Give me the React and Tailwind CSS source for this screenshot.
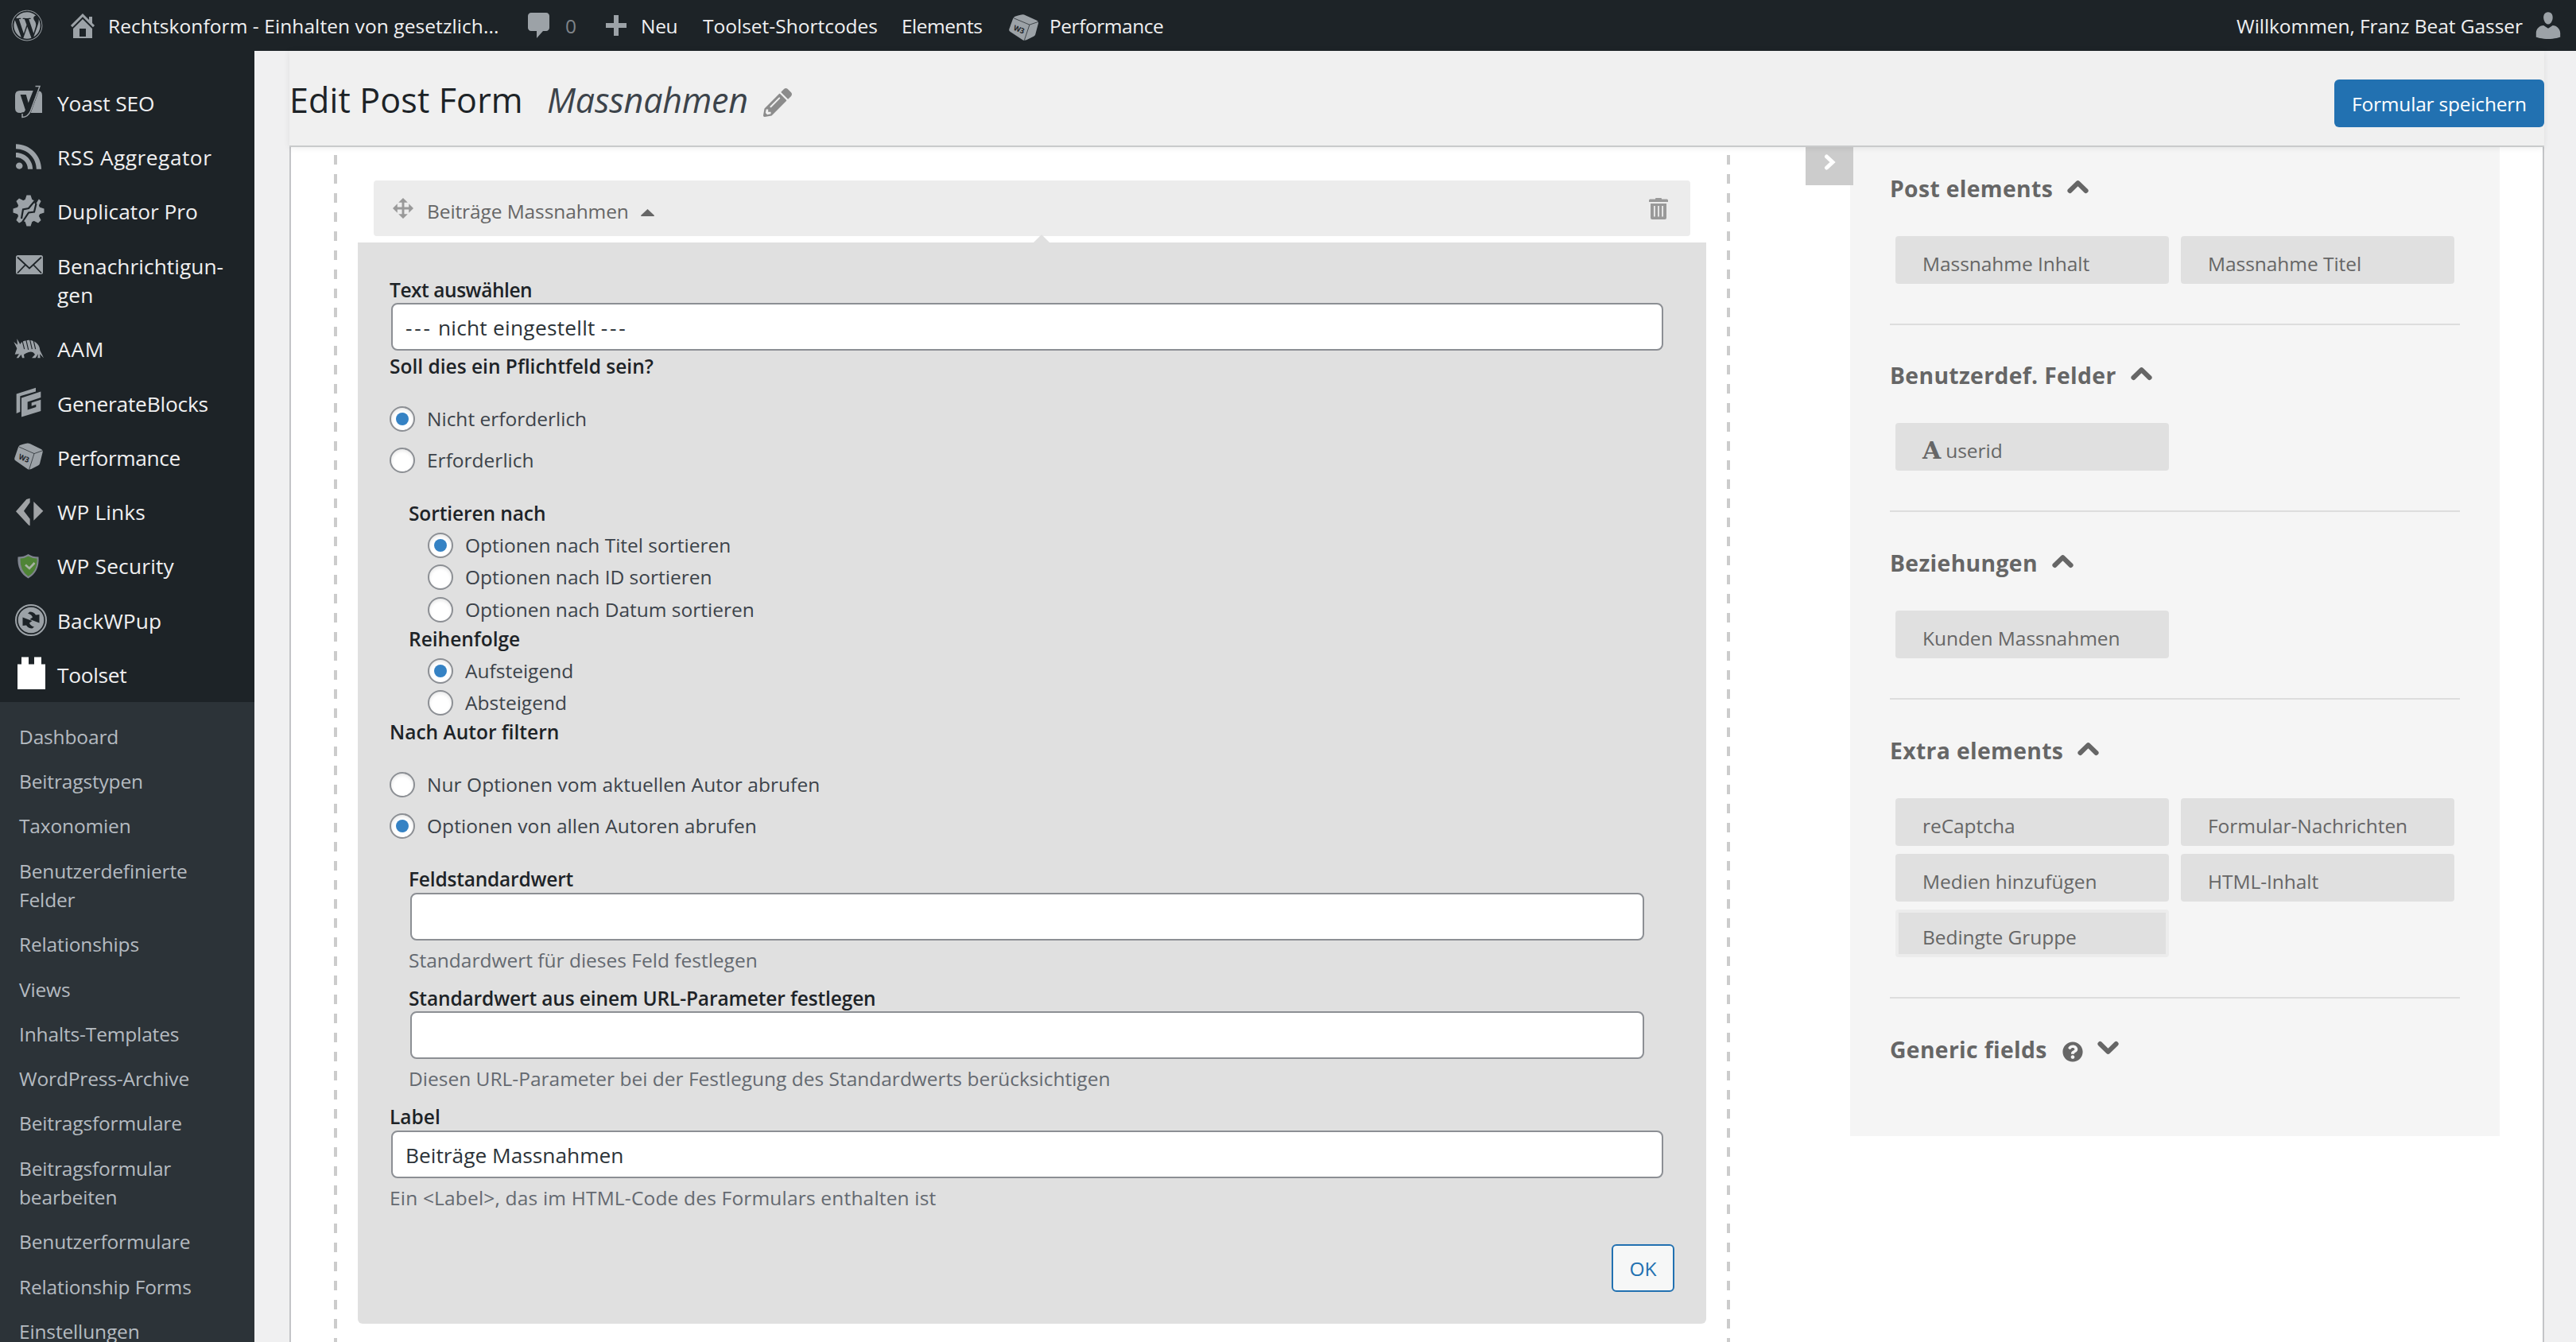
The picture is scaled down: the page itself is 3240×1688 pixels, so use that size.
import { FaWordpress, FaPencilAlt, FaQuestionCircle } from "react-icons/fa";

/* ---------- icons ---------- */

function W3Cube({ className, transform, viewBox = "54 412 107 88" }) {
  return (
    <svg className={className} viewBox={viewBox} preserveAspectRatio="none">
      <g transform={transform}>
        <path
          d="M73 421 Q76 418 96 414 Q106 411 114 415 L154 432 Q163 436 161 442 L150 480 Q149 484 144 486 L118 498 Q109 501 103 497 L58 470 Q53 467 55 461 L69 426 Z"
          fill="#9ca2a7"
        />
        <path d="M72 425 L129 447 L161 437 M129 447 L110 499" fill="none" stroke="#1d2327" strokeWidth="2" />
        <text
          x="69"
          y="464"
          fontSize="25"
          fontWeight="700"
          fill="#1d2327"
          fontFamily="Open Sans, sans-serif"
          transform="rotate(20 69 464)"
          textLength="40"
          lengthAdjust="spacingAndGlyphs"
        >
          W3
        </text>
      </g>
    </svg>
  );
}

function MenuIcon({ children }) {
  return (
    <svg className="h-[68px] w-[72px] shrink-0" viewBox="0 0 72 68" fill="#9ca2a7">
      {children}
    </svg>
  );
}

const YoastIcon = (
  <MenuIcon>
    <path d="M25 19 H47 Q53 19 53 25 V47 H25 Q19 47 19 41 V25 Q19 19 25 19 Z" />
    <path d="M45 13.5 H50 L38 46 Q36 51.5 28 52.5 V47.5 Q32 47 33 43.5 L27 25 H32 L35.5 37.5 Z" fill="#1d2327" stroke="#1d2327" strokeWidth="2" />
    <path d="M44.5 13.5 H50 L38.5 44.5 Q35.5 52 28 52.5 V48" fill="none" stroke="#9ca2a7" strokeWidth="1.5" />
  </MenuIcon>
);

const RssIcon = (
  <MenuIcon>
    <path
      transform="translate(16 12.8) scale(2)"
      d="M14.92 18H18C18 9.32 10.82 2.25 2 2.25v3.02c7.12 0 12.92 5.71 12.92 12.73zm-5.44 0h3.08C12.56 12.27 7.82 7.6 2 7.6v3.02c2 0 3.87.77 5.29 2.16C8.7 14.17 9.48 16.03 9.48 18zm-5.35-.02c1.17 0 2.13-.93 2.13-2.09 0-1.15-.96-2.09-2.13-2.09-1.18 0-2.13.94-2.13 2.09 0 1.16.95 2.09 2.13 2.09z"
    />
  </MenuIcon>
);

const DuplicatorIcon = (
  <MenuIcon>
    <circle cx="36" cy="33" r="14.5" />
    {[0, 45, 90, 135, 180, 225, 270, 315].map((a) => (
      <path key={a} d="M31 21 L33.5 13.5 H38.5 L41 21 Z" transform={`rotate(${a} 36 33)`} />
    ))}
    <path d="M27 43 L29 31.5 L36 30 L46 18 M27 49 L36 35.5 L43 34.5 L45.5 24" fill="none" stroke="#1d2327" strokeWidth="2.2" />
    <path d="M50 14 L44 24" stroke="#1d2327" strokeWidth="2.5" />
  </MenuIcon>
);

const MailIcon = (
  <MenuIcon>
    <rect x="20" y="21" width="34" height="24" rx="2.5" />
    <path d="M22 23.5 L37 37.5 L52 23.5 M22 43.5 L32 33 M52 43.5 L42 33" fill="none" stroke="#1d2327" strokeWidth="1.8" />
  </MenuIcon>
);

const ArmadilloIcon = (
  <MenuIcon>
    <g transform="translate(0 -4.9) scale(.3333 .3827)">
      <path d="M56 119 L64 100 L52 78 L66 88 L64 68 L76 86 Q82 76 96 74 Q118 68 138 82 Q150 92 151 106 L165 131 L150 118 L152 131 H142 L144 118 L134 131 H120 L132 120 Q124 108 108 112 Q98 114 90 120 L92 131 H84 L80 120 L70 131 H62 L72 118 Z" />
      <path d="M84 74 L92 102 M98 70 L107 104 M112 68 L121 102 M126 72 L134 102" fill="none" stroke="#1d2327" strokeWidth="3.4" />
    </g>
  </MenuIcon>
);

const GenerateBlocksIcon = (
  <MenuIcon>
    <g transform="translate(0 -73.2) scale(.3333 .3827)">
      <path d="M62 250 L135 230 V242 L76 257 V309 L62 314 Z" />
      <path d="M81 263 L154 242 V262 L104 276 V302 L136 293 V285 L119 290 V279 L154 269 V306 L81 326 Z" />
    </g>
  </MenuIcon>
);

const PerformanceIcon = (
  <W3Cube
    className="h-[68px] w-[72px] shrink-0"
    viewBox="0 0 72 68"
    transform="translate(0 -141.5) scale(.3333 .3827)"
  />
);

const LinksIcon = (
  <MenuIcon>
    <g transform="translate(0 -209.8) scale(.3333 .3827)" fill="#a0a3a6">
      <path d="M60 635 L100 595 L113 592 V606 L90 634 L113 660 V682 L108 680 Z" />
      <path d="M127 603 L163 634 L127 665 Z" />
    </g>
  </MenuIcon>
);

const ShieldIcon = (
  <MenuIcon>
    <path d="M35.5 19 Q41 22.5 48.5 22.5 Q50 41 35.5 49.5 Q21 41 22.5 22.5 Q30 22.5 35.5 19 Z" fill="#80858f" />
    <path d="M35.5 21.5 Q40.5 24.5 46.5 24.5 Q47.5 39.500 35.5 47 Q25 39.500 25.500 24.500 Q31 24.500 35.500 21.500 Z" fill="#4f8436" />
    <path d="M32 32.5 L37 37 L43.5 30" fill="none" stroke="#a9b3a5" strokeWidth="2.6" />
  </MenuIcon>
);

const BackWPupIcon = (
  <MenuIcon>
    <circle cx="39" cy="34" r="19" fill="none" stroke="#9ca2a7" strokeWidth="2" />
    <circle cx="39" cy="34" r="16.3" />
    <path d="M37.5 23.5 Q42.5 23.5 45 27.5 L49.5 27 V37.5 L37.5 33 L41 30.5 Q40 27 35 25.5 Z" fill="#1d2327" />
    <path d="M40.5 44.5 Q35.5 44.5 33 40.5 L28.5 41 V30.5 L40.5 35 L37 37.5 Q38 41 43 42.5 Z" fill="#1d2327" />
  </MenuIcon>
);

const ToolsetIcon = (
  <MenuIcon>
    <path d="M22 20.5 H27 V11.5 H36 V20.5 H43 V11.5 H52 V20.5 H57 V52 H22 Z" fill="#fff" />
  </MenuIcon>
);

function Chevron({ down = false }) {
  return (
    <svg
      className={down ? "h-[18px] w-[27px] shrink-0 rotate-180" : "h-[18px] w-[27px] shrink-0"}
      viewBox="0 0 27 18"
      fill="none"
      stroke="#666"
      strokeWidth="6"
      strokeLinejoin="round"
      strokeLinecap="round"
    >
      <path d="M3.4 14 L13.5 4.2 L23.6 14" />
    </svg>
  );
}

/* ---------- top bar ---------- */

function AdminBar() {
  return (
    <header className="flex h-16 shrink-0 items-center bg-[#1d2327] pl-[14px] text-[24.5px] whitespace-nowrap text-[#f0f0f1]">
      <div className="w-[70px]">
        <FaWordpress className="size-10 text-[#9ca2a7]" />
      </div>
      <svg className="mr-[12px] size-[40px]" viewBox="0 0 20 20" fill="#9ca2a7">
        <path d="M16 8.5l1.53 1.53-1.06 1.06L10 4.6l-6.47 6.49-1.06-1.06L10 2.5l4 4v-2h2v4zm-6-2.46l6 5.99V18H4v-5.97zM12 17v-5H8v5h4z" />
      </svg>
      <span className="w-[522px] pt-[3px] tracking-[0.08px]">Rechtskonform - Einhalten von gesetzlich...</span>
      <svg className="mr-[13px] h-[40px] w-[40px]" viewBox="0 0 20 20" fill="#9ca2a7">
        <path d="M5 2h9.5c1.1 0 2 .9 2 2v7.5c0 1.1-.9 2-2 2h-2L8.5 18v-4.5H5c-1.1 0-2-.9-2-2V4c0-1.1.9-2 2-2z" />
      </svg>
      <span className="w-[51px] pt-[3px] text-[#7f8489]">0</span>
      <svg className="mr-[18px] size-[26px]" viewBox="0 0 26 26" fill="#9ca2a7">
        <path d="M10 0 H16 V10 H26 V16 H16 V26 H10 V16 H0 V10 H10 Z" />
      </svg>
      <span className="w-[78px] pt-[3px] tracking-[-0.3px]">Neu</span>
      <span className="w-[250px] pt-[3px]">Toolset-Shortcodes</span>
      <span className="w-[135px] pt-[3px] tracking-[-0.5px]">Elements</span>
      <W3Cube className="mt-[5px] h-[33px] w-[37px]" />
      <span className="ml-[14px] pt-[3px] tracking-[-0.45px]">Performance</span>
      <span className="ml-auto pt-[3px] tracking-[-0.06px]">Willkommen, Franz Beat Gasser</span>
      <svg className="mr-[14px] ml-[11px] size-[42px]" viewBox="0 0 20 20" fill="#9ca2a7">
        <path d="M10 9.25c-2.27 0-2.73-3.44-2.73-3.44C7 4.02 7.82 2 9.97 2c2.16 0 2.98 2.02 2.71 3.81 0 0-.41 3.44-2.68 3.44zm0 2.57L12.72 10c2.39 0 4.52 2.33 4.52 4.53v2.49s-3.65 1.13-7.24 1.13c-3.65 0-7.24-1.13-7.24-1.13v-2.49c0-2.25 1.94-4.48 4.47-4.48z" />
      </svg>
    </header>
  );
}

/* ---------- left navigation ---------- */

const menu = [
  { icon: YoastIcon, label: "Yoast SEO" },
  { icon: RssIcon, label: "RSS Aggregator", tight: "tracking-[0.5px]" },
  { icon: DuplicatorIcon, label: "Duplicator Pro", tight: "tracking-[0px]" },
  { icon: MailIcon, label: "Benachrichtigun-\ngen", tight: "tracking-[0.05px]" },
  { icon: ArmadilloIcon, label: "AAM", tight: "tracking-[0.8px]" },
  { icon: GenerateBlocksIcon, label: "GenerateBlocks", tight: "tracking-[-0.2px]" },
  { icon: PerformanceIcon, label: "Performance", tight: "tracking-[-0.4px]" },
  { icon: LinksIcon, label: "WP Links", tight: "tracking-[0.15px]" },
  { icon: ShieldIcon, label: "WP Security", tight: "tracking-[0.2px]" },
  { icon: BackWPupIcon, label: "BackWPup", tight: "tracking-[0.1px]" },
  { icon: ToolsetIcon, label: "Toolset", tight: "tracking-[-0.3px]" },
];

const submenu = [
  "Dashboard",
  "Beitragstypen",
  "Taxonomien",
  "Benutzerdefinierte\nFelder",
  "Relationships",
  "Views",
  "Inhalts-Templates",
  "WordPress-Archive",
  "Beitragsformulare",
  "Beitragsformular\nbearbeiten",
  "Benutzerformulare",
  "Relationship Forms",
  "Einstellungen",
];

function Sidebar() {
  return (
    <nav className="flex w-80 shrink-0 flex-col bg-[#1d2327] pt-[31.3px]">
      <ul className="text-[26.3px] leading-[36.4px] text-[#f0f0f1]">
        {menu.map(({ icon, label, tight = "tracking-[-0.1px]" }) => (
          <li key={label} className="flex items-start">
            {icon}
            <span className={`pt-[16.45px] pb-[15.45px] whitespace-pre ${tight}`}>{label}</span>
          </li>
        ))}
      </ul>
      <ul className="grow bg-[#2c3338] pt-4 pl-6 text-[24.5px] leading-[36.4px] tracking-[-0.15px] text-[#b5bbc1]">
        {submenu.map((label) => (
          <li key={label} className="py-[9.95px] whitespace-pre">
            {label}
          </li>
        ))}
      </ul>
    </nav>
  );
}

/* ---------- form controls ---------- */

function Label({ className = "", children }) {
  return <div className={`h-8 text-[24.5px] leading-8 font-semibold text-[#1d2327] ${className}`}>{children}</div>;
}

function Hint({ className = "", children }) {
  return <p className={`mt-[9px] h-8 text-[24.5px] leading-8 text-[#646970] ${className}`}>{children}</p>;
}

function Field({ className = "", children }) {
  return (
    <div
      className={`mr-[14px] ml-[2px] flex h-[60px] items-center rounded-lg border-2 border-[#8c8f94] bg-white px-4 pt-[3px] text-[26.3px] whitespace-pre text-[#2c3338] ${className}`}
    >
      {children}
    </div>
  );
}

function Radio({ checked = false, className = "", children }) {
  return (
    <label className={`flex h-8 items-start gap-[15px] text-[24.5px] leading-8 text-[#3c434a] ${className}`}>
      <span className="flex size-8 items-center justify-center rounded-full border-2 border-[#8c8f94] bg-white shadow-[inset_0_2px_4px_rgba(0,0,0,0.1)]">
        {checked && <span className="size-4 rounded-full bg-[#3582c4]" />}
      </span>
      {children}
    </label>
  );
}

function DashedEdge() {
  return (
    <div className="mt-[10px] w-1 shrink-0 bg-[repeating-linear-gradient(to_bottom,#ccc_0_12px,transparent_12px_24px)]" />
  );
}

function FieldEditor() {
  return (
    <section className="w-[1748px] shrink-0 pt-[42px]">
      <div className="mx-[46px] flex h-[70px] items-center rounded bg-[#ececec] pr-7 pl-6">
        <svg className="size-[26px]" viewBox="1 1 18 18" fill="#999">
          <path d="M19 10l-4 4v-3h-4v4h3l-4 4-4-4h3v-4H5v3l-4-4 4-4v3h4V5H6l4-4 4 4h-3v4h4V6z" />
        </svg>
        <span className="ml-[17px] pt-[9px] text-[24.5px] tracking-[-0.1px] text-[#666]">Beiträge Massnahmen</span>
        <svg className="mt-[10px] ml-[15px] h-[9px] w-[17px]" viewBox="0 0 17 9" fill="#666">
          <path d="M8.5 0 L17 8 Q17 9 16 9 H1 Q0 9 0 8 Z" />
        </svg>
        <svg className="ml-auto h-[27px] w-6" viewBox="0 0 24 27" fill="#999">
          <path d="M9 0 H15 Q16 0 16 1 V1.5 H22.5 Q24 1.5 24 3 V5 H0 V3 Q0 1.5 1.5 1.5 H8 V1 Q8 0 9 0 Z" />
          <path
            fillRule="evenodd"
            d="M2 7 H22 V25 Q22 27 20 27 H4 Q2 27 2 25 Z M6 10 V23.5 H7.8 V10 Z M11.1 10 V23.5 H12.9 V10 Z M16.2 10 V23.5 H18 V10 Z"
          />
        </svg>
      </div>

      <div className="relative mx-[26px] mt-2 rounded-b-md bg-[#e0e0e0] px-10 pt-11 pb-10">
        <div className="absolute -top-[10px] left-[850px] h-[10px] w-5 bg-[#e0e0e0] [clip-path:polygon(50%_0,100%_100%,0_100%)]" />
        <Label className="tracking-[-0.45px]">Text auswählen</Label>
        <Field>
          <span className="tracking-[2.8px]">---</span>
          <span className="tracking-[0.25px]"> nicht eingestellt </span>
          <span className="tracking-[2.8px]">---</span>
        </Field>
        <Label className="mt-1">Soll dies ein Pflichtfeld sein?</Label>
        <Radio checked className="mt-[34px]">Nicht erforderlich</Radio>
        <Radio className="mt-5">Erforderlich</Radio>

        <div className="ml-6">
          <Label className="mt-[35px] tracking-[-0.1px]">Sortieren nach</Label>
          <div className="ml-6">
            <Radio checked className="mt-2">Optionen nach Titel sortieren</Radio>
            <Radio className="mt-2">Optionen nach ID sortieren</Radio>
            <Radio className="mt-[9px]">Optionen nach Datum sortieren</Radio>
          </div>
          <Label className="mt-[5px]">Reihenfolge</Label>
          <div className="ml-6">
            <Radio checked className="mt-2">Aufsteigend</Radio>
            <Radio className="mt-2">Absteigend</Radio>
          </div>
        </div>

        <Label className="mt-[5px]">Nach Autor filtern</Label>
        <Radio className="mt-[34px]">
          <span className="tracking-[0.05px]">Nur Optionen vom aktuellen Autor abrufen</span>
        </Radio>
        <Radio checked className="mt-5">
          <span className="tracking-[0.05px]">Optionen von allen Autoren abrufen</span>
        </Radio>

        <div className="mx-6">
          <Label className="mt-[35px] tracking-[-0.2px]">Feldstandardwert</Label>
          <Field className="mt-px" />
          <Hint>Standardwert für dieses Feld festlegen</Hint>
          <Label className="mt-4 tracking-[-0.13px]">Standardwert aus einem URL-Parameter festlegen</Label>
          <Field />
          <Hint>Diesen URL-Parameter bei der Festlegung des Standardwerts berücksichtigen</Hint>
        </div>

        <Label className="mt-4">Label</Label>
        <Field className="mt-px">Beiträge Massnahmen</Field>
        <Hint className="tracking-[0.18px]">Ein &lt;Label&gt;, das im HTML-Code des Formulars enthalten ist</Hint>

        <div className="mt-[42px] flex justify-end">
          <button className="h-[60px] w-[79px] rounded-md border-2 border-[#2271b1] bg-[#f6f7f7] pt-[2px] text-[24.5px] text-[#2271b1]">
            OK
          </button>
        </div>
      </div>
    </section>
  );
}

/* ---------- element palette ---------- */

const groups = [
  { title: "Post elements", items: ["Massnahme Inhalt", "Massnahme Titel"] },
  { title: "Benutzerdef. Felder", items: ["userid"] },
  { title: "Beziehungen", items: ["Kunden Massnahmen"] },
  {
    title: "Extra elements",
    items: ["reCaptcha", "Formular-Nachrichten", "Medien hinzufügen", "HTML-Inhalt", "Bedingte Gruppe"],
  },
];

function GroupTitle({ children }) {
  return <h3 className="text-[28.3px] leading-10 font-bold tracking-[0.35px] text-[#666]">{children}</h3>;
}

function PaletteItem({ label }) {
  return (
    <div
      className={`flex h-[60px] items-center rounded bg-[#e0e0e0] pt-[10px] text-[24.5px] leading-8 tracking-[-0.05px] text-[#666] ${
        label === "Bedingte Gruppe" ? "border-4 border-[#ececec] pl-[30px]" : "pl-[34px]"
      }`}
    >
      {label === "userid" && (
        <span className="-mt-[1px] mr-[6px] font-['DejaVu_Serif',serif] text-[30px] font-bold">A</span>
      )}
      {label}
    </div>
  );
}

function Palette() {
  return (
    <aside className="h-[1244px] w-[817px] shrink-0 bg-[#f5f5f5] pt-[31.5px] pr-[50px] pl-[50px]">
      {groups.map(({ title, items }) => (
        <div key={title} className="mb-[43.85px] border-b-2 border-[#ddd] pb-[50px] last-of-type:mb-[43px]">
          <div className="flex items-start gap-[18px]">
            <GroupTitle>{title}</GroupTitle>
            <span className="mt-[9px]">
              <Chevron />
            </span>
          </div>
          <div className="mt-10 ml-[7px] grid grid-cols-[344px_344px] gap-x-[15px] gap-y-[10px]">
            {items.map((label) => (
              <PaletteItem key={label} label={label} />
            ))}
          </div>
        </div>
      ))}
      <div className="flex items-start">
        <GroupTitle>Generic fields</GroupTitle>
        <FaQuestionCircle className="mt-[10px] ml-[19px] size-[26px] text-[#666]" />
        <span className="mt-[9px] ml-[18px]">
          <Chevron down />
        </span>
      </div>
    </aside>
  );
}

/* ---------- page ---------- */

export default function App() {
  return (
    <div className="flex h-[1688px] w-[3240px] flex-col overflow-hidden bg-[#f0f0f1] font-['Open_Sans',sans-serif]">
      <AdminBar />
      <div className="flex min-h-0 grow">
        <Sidebar />
        <main className="flex w-[2920px] flex-col pr-10 pl-11">
          <div className="z-10 flex h-[121px] shrink-0 items-start border-b-2 border-[#c9cacb] bg-[#f0f0f0] shadow-[0_1px_8px_rgba(0,0,0,0.08)]">
            <h1 className="mt-[32px] w-[324px] text-[43px] leading-[60px] tracking-[0.15px] text-[#1d2327]">
              Edit Post Form
            </h1>
            <span className="mt-[32px] w-[272px] text-[43px] leading-[60px] tracking-[-0.2px] text-[#3c434a] italic">
              Massnahmen
            </span>
            <FaPencilAlt className="mt-[47px] size-[36px] text-[#8c8c8c]" />
            <button className="mt-9 ml-auto h-[60px] w-[264px] rounded-md bg-[#2271b1] pt-[3px] text-[24.5px] tracking-[-0.2px] text-white">
              Formular speichern
            </button>
          </div>
          <div className="flex min-h-0 grow border-x-2 border-[#c3c4c7] bg-white pl-[54px]">
            <DashedEdge />
            <FieldEditor />
            <DashedEdge />
            <div className="z-[1] -mr-1 ml-[95px] flex h-12 w-[60px] shrink-0 items-center justify-center bg-[#ccc]">
              <svg
                className="-mt-[10px] h-5 w-[15px]"
                viewBox="0 0 15 20"
                fill="none"
                stroke="#fff"
                strokeWidth="5"
                strokeLinecap="round"
              >
                <path d="M3.5 3 L11 10 L3.5 17" />
              </svg>
            </div>
            <Palette />
          </div>
        </main>
      </div>
    </div>
  );
}
